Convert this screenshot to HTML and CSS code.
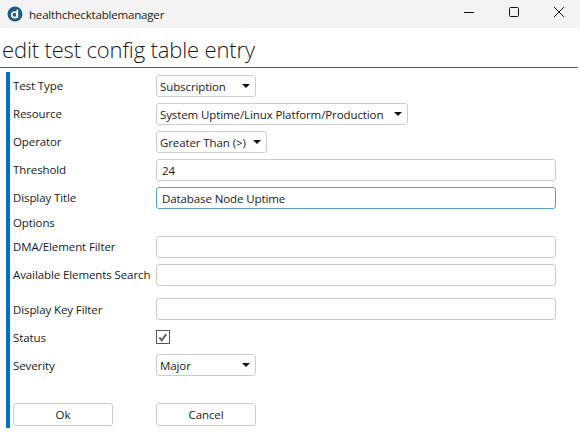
FILE: index.html
```html
<!DOCTYPE html>
<html lang="en">
<head>
    <meta charset="UTF-8">
    <title>healthchecktablemanager</title>
    <link rel="stylesheet" href="styles.css">
</head>
<body>
    <div class="titlebar">
        <svg class="app-icon" width="16" height="16" viewBox="0 0 16 16">
            <circle cx="8" cy="8" r="7.5" fill="#1f5c80"/>
            <circle cx="7.5" cy="8.8" r="2.8" fill="none" stroke="#fff" stroke-width="1.7"/>
            <path d="M10.3 3.6V12" stroke="#fff" stroke-width="1.7"/>
        </svg>
        <span class="app-name">healthchecktablemanager</span>
        <div class="window-controls">
            <svg width="10" height="10" viewBox="0 0 10 10"><path d="M0 5.5H10" stroke="#111" stroke-width="1"/></svg>
            <svg width="10" height="10" viewBox="0 0 10 10"><rect x="0.5" y="0.5" width="9" height="9" rx="1" fill="none" stroke="#111"/></svg>
            <svg width="10" height="10" viewBox="0 0 10 10"><path d="M0 0L10 10M10 0L0 10" stroke="#111" stroke-width="1"/></svg>
        </div>
    </div>

    <h1 class="page-title">edit test config table entry</h1>

    <div class="form">
        <div class="row">
            <label>Test Type</label>
            <div class="select w100">Subscription<span class="arrow"></span></div>
        </div>
        <div class="row">
            <label>Resource</label>
            <div class="select w252">System Uptime/Linux Platform/Production<span class="arrow"></span></div>
        </div>
        <div class="row">
            <label>Operator</label>
            <div class="select w111">Greater Than (&gt;)<span class="arrow"></span></div>
        </div>
        <div class="row">
            <label>Threshold</label>
            <input class="field" type="text" value="24">
        </div>
        <div class="row">
            <label>Display Title</label>
            <input class="field focused" type="text" value="Database Node Uptime">
        </div>
        <div class="row options-row">
            <label>Options</label>
        </div>
        <div class="row">
            <label>DMA/Element Filter</label>
            <input class="field" type="text">
        </div>
        <div class="row">
            <label>Available Elements Search</label>
            <input class="field" type="text">
        </div>
        <div class="row key-row low">
            <label>Display Key Filter</label>
            <input class="field" type="text">
        </div>
        <div class="row low">
            <label>Status</label>
            <span class="checkbox">
                <svg width="13" height="13" viewBox="0 0 13 13"><path d="M2.5 6.5L5.2 9.5L10 2.8" fill="none" stroke="#666" stroke-width="2.2"/></svg>
            </span>
        </div>
        <div class="row low">
            <label>Severity</label>
            <div class="select w100">Major<span class="arrow"></span></div>
        </div>
        <div class="buttons">
            <button type="button" class="button">Ok</button>
            <button type="button" class="button">Cancel</button>
        </div>
    </div>
</body>
</html>
```

FILE: styles.css
```css
body {
    margin: 0;
    font-family: "Open Sans", "Noto Sans", sans-serif;
    font-size: 11.5px;
    letter-spacing: -0.1px;
    color: #1a1a1a;
    background-color: #fff;
}
.titlebar {
    display: flex;
    align-items: center;
    height: 28px;
    padding-left: 7px;
    background-color: #f3f3f3;
}
.app-icon {
    margin-right: 6px;
}
.app-name {
    letter-spacing: -0.18px;
}
.window-controls {
    display: flex;
    gap: 35px;
    margin: 0 16px 4px auto;
}
.page-title {
    margin: 0 2px 0 0;
    height: 39px;
    line-height: 42px;
    padding-left: 2px;
    font-size: 22px;
    font-weight: 300;
    letter-spacing: -0.15px;
    border-bottom: 1px solid #1f6fb0;
}
.form {
    margin: 4px 0 0 6px;
    padding: 3px 0 2px 3px;
    border-left: 4px solid #0072c6;
    width: 547px;
}
.row {
    display: grid;
    grid-template-columns: 143px 1fr;
    align-items: center;
    height: 22px;
    margin-bottom: 6px;
}
.row label {
    margin-top: -1px;
}
.row.low label {
    margin-top: 1px;
}
.options-row {
    height: 15px;
}
.key-row {
    margin-top: 12px;
}
.select {
    display: flex;
    align-items: center;
    justify-content: space-between;
    box-sizing: border-box;
    height: 22px;
    padding: 0 5px 0 3px;
    border: 1px solid #ccc;
    border-radius: 3px;
}
.w100 { width: 100px; }
.w111 { width: 111px; }
.w252 { width: 252px; }
.arrow {
    width: 0;
    height: 0;
    border-left: 4px solid transparent;
    border-right: 4px solid transparent;
    border-top: 4px solid #111;
}
.field {
    box-sizing: border-box;
    width: 400px;
    height: 22px;
    padding: 0 5px;
    font: inherit;
    letter-spacing: inherit;
    color: inherit;
    border: 1px solid #ccc;
    border-radius: 3px;
    outline: none;
}
.focused {
    border-color: #5b9bd0;
}
.checkbox {
    box-sizing: border-box;
    display: flex;
    width: 14px;
    height: 14px;
    border: 1px solid #555;
}
.buttons {
    display: grid;
    grid-template-columns: 143px 1fr;
    margin-top: 27px;
}
.button {
    width: 100px;
    height: 23px;
    padding: 0;
    font: inherit;
    letter-spacing: inherit;
    color: inherit;
    background-color: #fff;
    border: 1px solid #ccc;
    border-radius: 3px;
}
```
